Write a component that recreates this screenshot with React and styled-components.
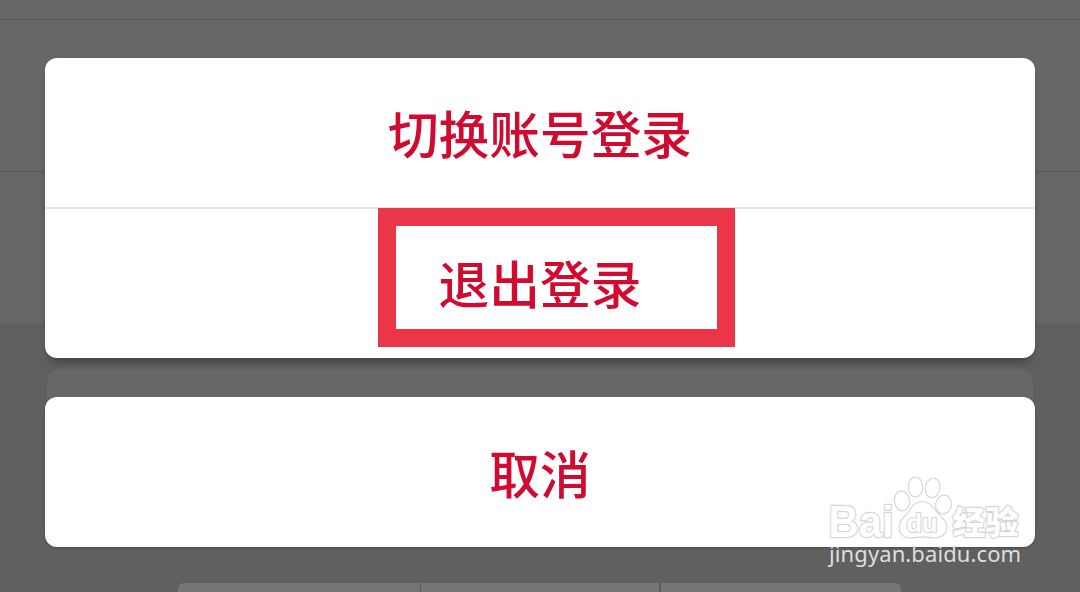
import styled, { createGlobalStyle } from "styled-components";

const GlobalStyle = createGlobalStyle`
  * {
    box-sizing: border-box;
  }

  body {
    margin: 0;
    font-family: "Noto Sans CJK SC", sans-serif;
  }
`;

const Screen = styled.main`
  position: relative;
  width: 1080px;
  height: 592px;
  overflow: hidden;
  background-color: #606060;
`;

const Page = styled.div`
  display: flex;
  flex-direction: column;
  height: 100%;
`;

const PageRow = styled.div`
  flex: none;
  height: ${(props) => props.$height}px;
  background-color: #666;
  border-bottom: 1px solid ${(props) => (props.$last ? "#646464" : "#585858")};
`;

const PageCard = styled.div`
  flex: none;
  height: 150px;
  margin: 46px 47px 0;
  border-radius: 14px;
  background-color: #676767;
`;

const TabBar = styled.div`
  display: grid;
  flex: none;
  grid-template-columns: 241.5px 238px 1fr;
  column-gap: 1.5px;
  width: 723px;
  height: 40px;
  margin: 64px 0 0 178px;
  border-radius: 6px;
  overflow: hidden;
  background-color: #5c5c5c;
`;

const Tab = styled.div`
  background-color: #757575;
`;

const Sheet = styled.div`
  position: absolute;
  inset: 0;
  display: flex;
  flex-direction: column;
  gap: 39px;
  padding: 58px 45px 0;
`;

const Group = styled.div`
  display: flex;
  flex-direction: column;
  border-radius: 12px;
  background-color: #fff;
  box-shadow: ${(props) =>
    props.$raised
      ? "0 7px 8px -3px rgba(0, 0, 0, 0.32)"
      : "0 1px 2px rgba(0, 0, 0, 0.22)"};
`;

const Action = styled.button`
  position: relative;
  display: flex;
  align-items: center;
  justify-content: center;
  height: ${(props) => props.$height || 150}px;
  padding: 0;
  border: none;
  background: none;
  color: #d10a30;
  font-family: inherit;
  font-size: 50.7px;
  font-weight: 500;
  line-height: 1;

  &:not(:first-child) {
    padding-bottom: 3px;
    border-top: 2px solid #e2e2e2;
  }
`;

const Highlight = styled.span`
  position: absolute;
  top: -1px;
  left: 333px;
  width: 357px;
  height: 139px;
  border: 18px solid #eb3647;
`;

const Watermark = styled.div`
  position: absolute;
  top: 472px;
  left: 824px;
  width: 200px;
`;

const Logo = styled.svg`
  display: block;
  width: 200px;
  height: 70px;
  overflow: visible;
  fill: #fff;
  stroke: #d6d6d6;
  stroke-width: 1.2;
`;

const LogoText = styled.text`
  font-family: ${(props) =>
    props.$cjk ? '"Noto Sans CJK SC", sans-serif' : '"Liberation Sans", sans-serif'};
  font-size: ${(props) => props.$size}px;
  font-weight: ${(props) => (props.$cjk ? 900 : 700)};
  paint-order: stroke;
  stroke-width: ${(props) => props.$stroke || 2.4}px;
  stroke-linejoin: round;
`;

const Domain = styled.div`
  margin: -2px 0 0 5px;
  color: #dedede;
  font-family: "Noto Sans", sans-serif;
  font-size: 22px;
  line-height: 26px;
  letter-spacing: 0.1px;
  white-space: nowrap;
`;

function BaiduLogo() {
  return (
    <Logo viewBox="0 0 200 70">
      <LogoText x="4.5" y="64.5" $size={45} textLength="65" lengthAdjust="spacingAndGlyphs">
        Bai
      </LogoText>
      <ellipse cx="78" cy="29" rx="7.5" ry="10" transform="rotate(-8 78 29)" />
      <ellipse cx="91.5" cy="15" rx="7.2" ry="10" />
      <ellipse cx="108.6" cy="16" rx="7.3" ry="9.8" transform="rotate(10 108.6 16)" />
      <ellipse cx="119.5" cy="32.5" rx="7.8" ry="9.5" transform="rotate(10 119.5 32.5)" />
      <path d="M98 29.5c-7 0-9.5 4.5-13.5 10.5-3.500 4.500-9.500 8-9.500 15 0 7 5 11 11 11 5 0 8-1.200 12-1.200s8 1.200 13 1.200c7 0 12-5 12-11 0-7-7-11-11-16-4-5-7-9.500-14-9.500z" />
      <LogoText x="82.5" y="60" $size={25} $stroke={2.2} textLength="31" lengthAdjust="spacingAndGlyphs">
        du
      </LogoText>
      <LogoText x="128.5" y="61.5" $size={32} $cjk textLength="66" lengthAdjust="spacingAndGlyphs">
        经验
      </LogoText>
    </Logo>
  );
}

function App() {
  return (
    <>
      <GlobalStyle />
      <Screen>
        <Page>
          <PageRow $height={20} />
          <PageRow $height={152} />
          <PageRow $height={151} $last />
          <PageCard />
          <TabBar>
            <Tab />
            <Tab />
            <Tab />
          </TabBar>
        </Page>

        <Sheet>
          <Group $raised>
            <Action $height={149}>切换账号登录</Action>
            <Action $height={151}>
              退出登录
              <Highlight />
            </Action>
          </Group>
          <Group>
            <Action>取消</Action>
          </Group>
        </Sheet>

        <Watermark>
          <BaiduLogo />
          <Domain>jingyan.baidu.com</Domain>
        </Watermark>
      </Screen>
    </>
  );
}

export default App;
